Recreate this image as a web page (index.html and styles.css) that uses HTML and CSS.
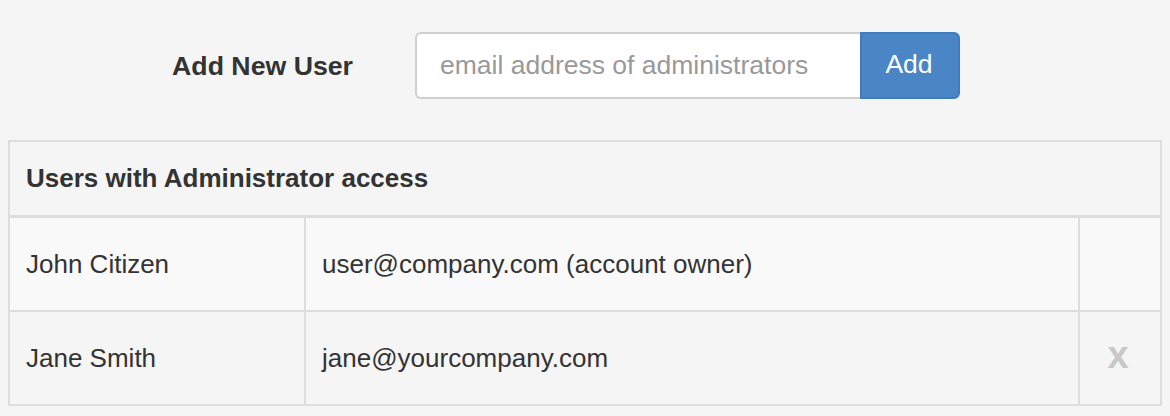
FILE: index.html
```html
<!DOCTYPE html>
<html>
<head>
<meta charset="utf-8">
<link rel="stylesheet" href="styles.css">
</head>
<body>
<form class="add-row">
  <label class="add-label" for="email">Add New User</label>
  <div class="input-group">
    <input id="email" class="email-input" type="text" placeholder="email address of administrators">
    <button type="button" class="add-btn">Add</button>
  </div>
</form>
<table class="users">
  <colgroup>
    <col class="c-name">
    <col class="c-email">
    <col class="c-action">
  </colgroup>
  <thead>
    <tr><th colspan="3">Users with Administrator access</th></tr>
  </thead>
  <tbody>
    <tr class="odd">
      <td>John Citizen</td>
      <td>user@company.com (account owner)</td>
      <td class="action"></td>
    </tr>
    <tr>
      <td>Jane Smith</td>
      <td>jane@yourcompany.com</td>
      <td class="action"><span class="remove">x</span></td>
    </tr>
  </tbody>
</table>
</body>
</html>
```
FILE: styles.css
```css
html, body {
  background: #f5f5f5;
}
body {
  margin: 8px;
  font-family: "Liberation Sans", Arial, Helvetica, sans-serif;
  color: #333;
}
.add-row {
  display: flex;
  align-items: center;
  margin: 24px 0 0 0;
  height: 67px;
}
.add-label {
  width: 345px;
  text-align: right;
  font-weight: bold;
  font-size: 26.7px;
  margin-right: 62px;
  padding-top: 2px;
}
.input-group {
  display: flex;
  height: 67px;
}
.email-input {
  box-sizing: border-box;
  width: 445px;
  height: 67px;
  border: 2px solid #cfcfcf;
  border-right: none;
  border-radius: 6px 0 0 6px;
  background: #fff;
  padding: 0 0 0 23px;
  font-family: "Liberation Sans", Arial, sans-serif;
  font-size: 26.5px;
  color: #555;
  outline: none;
}
.email-input::placeholder {
  color: #999;
}
.add-btn {
  box-sizing: border-box;
  width: 100px;
  height: 67px;
  border: 2px solid #3f7cbc;
  border-radius: 0 6px 6px 0;
  background: #4a86c6;
  color: #fff;
  font-family: "Liberation Sans", Arial, sans-serif;
  font-size: 26.5px;
  padding: 0 2px 3px 0;
}
.users {
  margin-top: 41px;
  width: 1152px;
  table-layout: fixed;
  border-collapse: collapse;
  border: 2px solid #dddddd;
  font-size: 26px;
}
.c-name { width: 296px; }
.c-email { width: 774px; }
.c-action { width: 82px; }
.users th {
  text-align: left;
  font-size: 26px;
  font-weight: bold;
  height: 73px;
  padding: 0 16px;
  border-bottom: 3px solid #dddddd;
  background: #f5f5f5;
}
.users td {
  border: 2px solid #dddddd;
  padding: 0 16px;
  height: 92px;
  background: #f5f5f5;
}
.users tr.odd td {
  background: #f9f9f9;
}
.users td.action {
  text-align: center;
  padding: 0;
}
.remove {
  font-weight: bold;
  font-size: 38px;
  color: #c8c8c8;
  position: relative;
  top: -3px;
  left: -2px;
}
```
